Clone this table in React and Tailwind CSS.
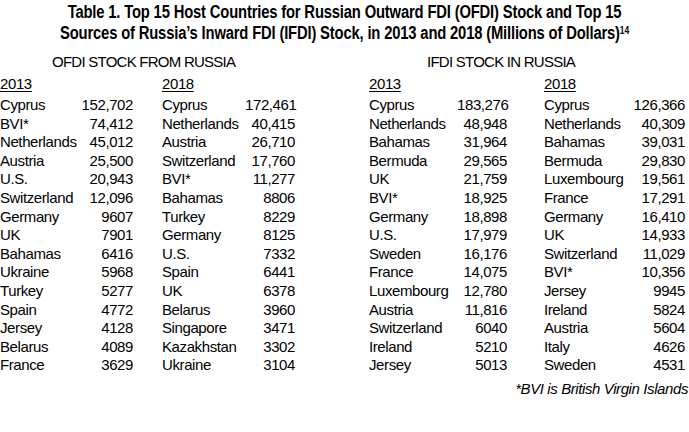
const ofdi2013 = [
  ['Cyprus', '152,702'], ['BVI*', '74,412'], ['Netherlands', '45,012'], ['Austria', '25,500'],
  ['U.S.', '20,943'], ['Switzerland', '12,096'], ['Germany', '9607'], ['UK', '7901'],
  ['Bahamas', '6416'], ['Ukraine', '5968'], ['Turkey', '5277'], ['Spain', '4772'],
  ['Jersey', '4128'], ['Belarus', '4089'], ['France', '3629'],
]
const ofdi2018 = [
  ['Cyprus', '172,461'], ['Netherlands', '40,415'], ['Austria', '26,710'], ['Switzerland', '17,760'],
  ['BVI*', '11,277'], ['Bahamas', '8806'], ['Turkey', '8229'], ['Germany', '8125'],
  ['U.S.', '7332'], ['Spain', '6441'], ['UK', '6378'], ['Belarus', '3960'],
  ['Singapore', '3471'], ['Kazakhstan', '3302'], ['Ukraine', '3104'],
]
const ifdi2013 = [
  ['Cyprus', '183,276'], ['Netherlands', '48,948'], ['Bahamas', '31,964'], ['Bermuda', '29,565'],
  ['UK', '21,759'], ['BVI*', '18,925'], ['Germany', '18,898'], ['U.S.', '17,979'],
  ['Sweden', '16,176'], ['France', '14,075'], ['Luxembourg', '12,780'], ['Austria', '11,816'],
  ['Switzerland', '6040'], ['Ireland', '5210'], ['Jersey', '5013'],
]
const ifdi2018 = [
  ['Cyprus', '126,366'], ['Netherlands', '40,309'], ['Bahamas', '39,031'], ['Bermuda', '29,830'],
  ['Luxembourg', '19,561'], ['France', '17,291'], ['Germany', '16,410'], ['UK', '14,933'],
  ['Switzerland', '11,029'], ['BVI*', '10,356'], ['Jersey', '9945'], ['Ireland', '5824'],
  ['Austria', '5604'], ['Italy', '4626'], ['Sweden', '4531'],
]

function Section ({ title, titleClass, cols, pad2, a, b }) {
  return (
    <div>
      <div className={`h-[22px] leading-[22px] text-[15px] tracking-[-0.75px] ${titleClass}`}>{title}</div>
      <div className={`grid ${cols} leading-[18.6px]`}>
        <div className="h-[23px] pt-[1px] leading-[19px]">
          <span className="underline underline-offset-[2px] decoration-1">2013</span>
        </div>
        <div />
        <div className={`h-[23px] pt-[1px] leading-[19px] ${pad2}`}>
          <span className="underline underline-offset-[2px] decoration-1">2018</span>
        </div>
        <div />
        {a.map((row, i) => (
          <Row key={i} left={row} right={b[i]} pad2={pad2} />
        ))}
      </div>
    </div>
  )
}

function Row ({ left, right, pad2 }) {
  return (
    <>
      <div className="whitespace-nowrap">{left[0]}</div>
      <div className="text-right">{left[1]}</div>
      <div className={`whitespace-nowrap ${pad2}`}>{right[0]}</div>
      <div className="text-right">{right[1]}</div>
    </>
  )
}

export default function App () {
  return (
    <div
      className="w-[689px] h-[432px] bg-white text-black overflow-hidden"
      style={{ fontFamily: '"Liberation Sans", Arial, sans-serif' }}
    >
      {/* heading, condensed like the printed face */}
      <div className="pt-[2px] text-center font-bold text-[17.5px] leading-[21px] tracking-[-0.2px] whitespace-nowrap scale-x-[0.845]">
        <div>Table 1. Top 15 Host Countries for Russian Outward FDI (OFDI) Stock and Top 15</div>
        <div>
          Sources of Russia’s Inward FDI (IFDI) Stock, in 2013 and 2018 (Millions of Dollars)
          <sup className="text-[10px]">14</sup>
        </div>
      </div>

      {/* tables */}
      <div className="flex mt-[7px] text-[15px] tracking-[-0.4px]">
        <Section
          title="OFDI STOCK FROM RUSSIA"
          titleClass="pl-[52px]"
          cols="grid-cols-[81px_52px_112px_50px]"
          pad2="pl-[29px]"
          a={ofdi2013}
          b={ofdi2018}
        />
        <div className="ml-[74px]">
          <Section
            title="IFDI STOCK IN RUSSIA"
            titleClass="pl-[58px]"
            cols="grid-cols-[88px_50px_117px_61px]"
            pad2="pl-[37px]"
            a={ifdi2013}
            b={ifdi2018}
          />
        </div>
      </div>

      <div className="mt-[4px] pr-[1px] text-right italic text-[15px] tracking-[-0.4px] leading-[19px]">
        *BVI is British Virgin Islands
      </div>
    </div>
  )
}
